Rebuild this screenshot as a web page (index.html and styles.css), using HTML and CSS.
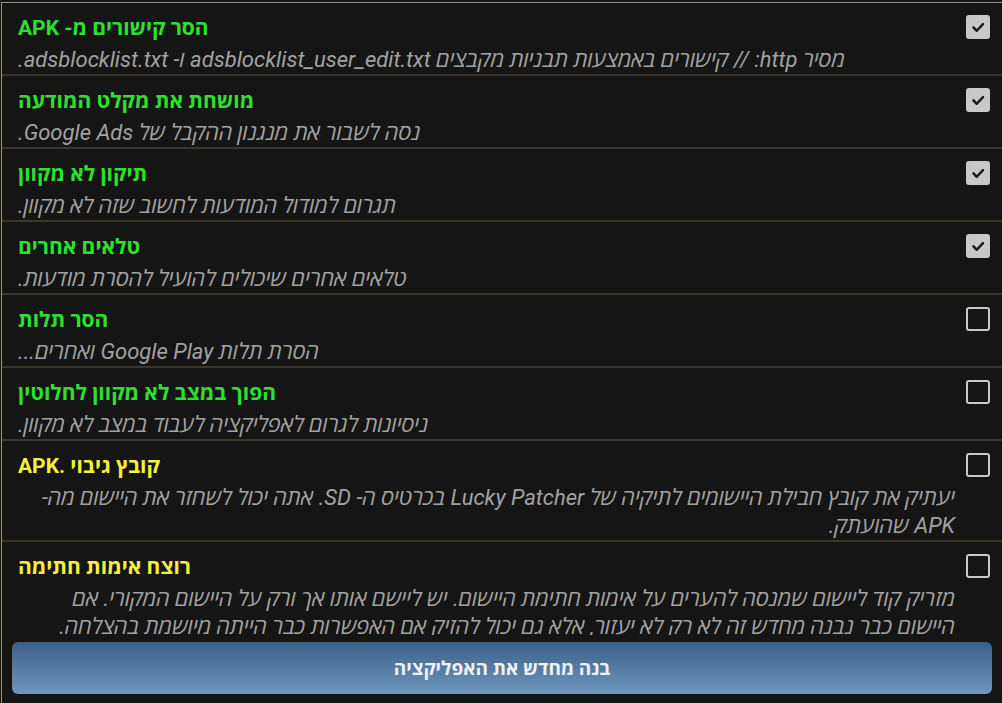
FILE: index.html
```html
<!DOCTYPE html>
<html lang="he">
<head>
    <meta charset="UTF-8">
    <title>Lucky Patcher - בנה מחדש</title>
    <link rel="stylesheet" href="styles.css">
</head>
<body>

<div class="window">

    <!-- רשימת אפשרויות -->
    <div class="options">

        <div class="option">
            <div class="option-text">
                <div class="title green">הסר קישורים מ- APK</div>
                <div class="desc">מסיר http: // קישורים באמצעות תבניות מקבצים adsblocklist_user_edit.txt ו- adsblocklist.txt.</div>
            </div>
            <span class="check checked"><svg viewBox="0 0 24 24"><path d="M6.5 12.5 L10.5 16.5 L18 8.5"/></svg></span>
        </div>

        <div class="option">
            <div class="option-text">
                <div class="title green">מושחת את מקלט המודעה</div>
                <div class="desc">נסה לשבור את מנגנון ההקבל של Google Ads.</div>
            </div>
            <span class="check checked"><svg viewBox="0 0 24 24"><path d="M6.5 12.5 L10.5 16.5 L18 8.5"/></svg></span>
        </div>

        <div class="option">
            <div class="option-text">
                <div class="title green">תיקון לא מקוון</div>
                <div class="desc">תגרום למודול המודעות לחשוב שזה לא מקוון.</div>
            </div>
            <span class="check checked"><svg viewBox="0 0 24 24"><path d="M6.5 12.5 L10.5 16.5 L18 8.5"/></svg></span>
        </div>

        <div class="option">
            <div class="option-text">
                <div class="title green">טלאים אחרים</div>
                <div class="desc">טלאים אחרים שיכולים להועיל להסרת מודעות.</div>
            </div>
            <span class="check checked"><svg viewBox="0 0 24 24"><path d="M6.5 12.5 L10.5 16.5 L18 8.5"/></svg></span>
        </div>

        <div class="option">
            <div class="option-text">
                <div class="title green">הסר תלות</div>
                <div class="desc">הסרת תלות Google Play ואחרים...</div>
            </div>
            <span class="check"></span>
        </div>

        <div class="option">
            <div class="option-text">
                <div class="title green">הפוך במצב לא מקוון לחלוטין</div>
                <div class="desc">ניסיונות לגרום לאפליקציה לעבוד במצב לא מקוון.</div>
            </div>
            <span class="check"></span>
        </div>

        <div class="option">
            <div class="option-text">
                <div class="title yellow">קובץ גיבוי .APK</div>
                <div class="desc">יעתיק את קובץ חבילת היישומים לתיקיה של Lucky Patcher בכרטיס ה- SD. אתה יכול לשחזר את היישום מה-<wbr>APK שהועתק.</div>
            </div>
            <span class="check"></span>
        </div>

        <div class="option">
            <div class="option-text">
                <div class="title yellow">רוצח אימות חתימה</div>
                <div class="desc">מזריק קוד ליישום שמנסה להערים על אימות חתימת היישום. יש ליישם אותו אך ורק על היישום המקורי. אם היישום כבר נבנה מחדש זה לא רק לא יעזור, אלא גם יכול להזיק אם האפשרות כבר הייתה מיושמת בהצלחה.</div>
            </div>
            <span class="check"></span>
        </div>

    </div>

    <!-- כפתור -->
    <div class="actions">
        <button class="btn-rebuild">בנה מחדש את האפליקציה</button>
    </div>

</div>

</body>
</html>
```
FILE: styles.css
```css
html, body {
    margin: 0;
    height: 100%;
    background: #151515;
}

body {
    font-family: Roboto, 'Open Sans', 'DejaVu Sans', sans-serif;
    padding: 2px 0 0 1px;
    box-sizing: border-box;
    overflow: hidden;
}

.window {
    height: 100%;
    display: flex;
    flex-direction: column;
    border-top: 1px solid #9a937a;
    border-left: 1px solid #9a937a;
    background: #151515;
}

.options {
    flex: 1;
    overflow: hidden;
}

.option {
    display: flex;
    align-items: flex-start;
    border-bottom: 2px solid #3b382a;
}

.option-text {
    flex: 1;
    min-width: 0;
    padding: 9px 0 0 16px;
}

.title,
.desc {
    width: fit-content;
    max-width: 100%;
    direction: rtl;
}

.title {
    font-size: 21px;
    font-weight: bold;
    line-height: 32px;
}

.green {
    color: #2ee02e;
}

.yellow {
    color: #f2f23a;
}

.desc {
    margin-top: 2px;
    font-size: 22px;
    font-style: italic;
    line-height: 28px;
    color: #a2a2a2;
}

.check {
    flex: none;
    width: 24px;
    height: 24px;
    margin: 12px 12px 0 11px;
    box-sizing: border-box;
    border: 2px solid #c8c8c8;
    border-radius: 3px;
}

.check.checked {
    background: #c8c8c8;
}

.check svg {
    display: block;
    width: 100%;
    height: 100%;
    fill: none;
    stroke: #1b1b1b;
    stroke-width: 3;
    stroke-linecap: round;
    stroke-linejoin: round;
}

.actions {
    padding: 7px 10px 10px 10px;
}

.btn-rebuild {
    display: block;
    width: 100%;
    height: 52px;
    border: none;
    border-radius: 6px;
    background: linear-gradient(to bottom, #3b6088, #7096be);
    color: #eef2f6;
    font-family: inherit;
    font-size: 19px;
    font-weight: bold;
    direction: rtl;
}
```
